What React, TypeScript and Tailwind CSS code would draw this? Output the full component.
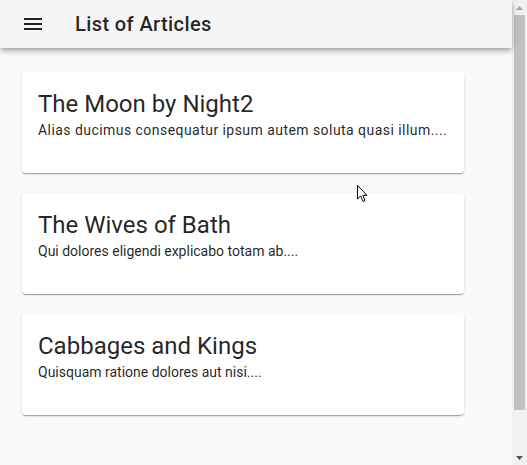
import React from "react";

const articles = [
  { title: "The Moon by Night2", body: "Alias ducimus consequatur ipsum autem soluta quasi illum....", tracking: "tracking-[0.45px]" },
  { title: "The Wives of Bath", body: "Qui dolores eligendi explicabo totam ab....", tracking: "" },
  { title: "Cabbages and Kings", body: "Quisquam ratione dolores aut nisi....", tracking: "" },
];

export default function App() {
  return (
    <div
      className="relative flex h-[465px] w-[527px] overflow-hidden bg-[#fafafa] text-[rgba(0,0,0,0.87)]"
      style={{ fontFamily: "Roboto, 'Helvetica Neue', sans-serif" }}
    >
      <div className="flex flex-1 flex-col">
        <header className="relative z-10 flex h-[48px] shrink-0 items-center bg-[#f5f5f5] pl-[21px] shadow-[0_2px_4px_-1px_rgba(0,0,0,0.2),0_4px_5px_0_rgba(0,0,0,0.14),0_1px_10px_0_rgba(0,0,0,0.12)]">
          <svg width="24" height="24" viewBox="0 0 24 24" className="text-[#212121]">
            <path fill="currentColor" d="M3 18h18v-2H3v2zm0-5h18v-2H3v2zm0-7v2h18V6H3z" />
          </svg>
          <h1 className="ml-[30px] text-[20px] font-medium leading-8 tracking-[0.02em]">List of Articles</h1>
        </header>
        <main className="flex flex-col gap-5 px-[22px] pt-6">
          {articles.map((a) => (
            <div
              key={a.title}
              className="w-[442px] rounded bg-white px-4 pt-4 pb-[33px] shadow-[0_2px_1px_-1px_rgba(0,0,0,0.2),0_1px_1px_0_rgba(0,0,0,0.14),0_1px_3px_0_rgba(0,0,0,0.12)]"
            >
              <div className="text-[24px] leading-8">{a.title}</div>
              <div className={"whitespace-nowrap text-[14px] leading-5 " + a.tracking}>{a.body}</div>
            </div>
          ))}
        </main>
      </div>
      <div className="flex w-[15px] shrink-0 flex-col items-center bg-[#f1f1f1]">
        <div className="flex h-[15px] w-full items-center justify-center">
          <svg width="7" height="4" viewBox="0 0 7 4">
            <polygon points="3.5,0 7,4 0,4" fill="#a3a3a3" />
          </svg>
        </div>
        <div className="h-[395px] w-[11px] bg-[#c1c1c1]" />
        <div className="flex-1" />
        <div className="flex h-[15px] w-full items-center justify-center">
          <svg width="7" height="4" viewBox="0 0 7 4">
            <polygon points="0,0 7,0 3.5,4" fill="#505050" />
          </svg>
        </div>
      </div>
      <svg
        className="pointer-events-none absolute left-[356px] top-[184px]"
        width="13"
        height="19"
        viewBox="0 0 13 19"
      >
        <path
          d="M1.5 1.5 L1.5 15 L4.6 12 L7 17.5 L9 16.6 L6.8 11.3 L11 11.3 Z"
          fill="white"
          stroke="black"
          strokeWidth="1"
          strokeLinejoin="round"
        />
      </svg>
    </div>
  );
}
